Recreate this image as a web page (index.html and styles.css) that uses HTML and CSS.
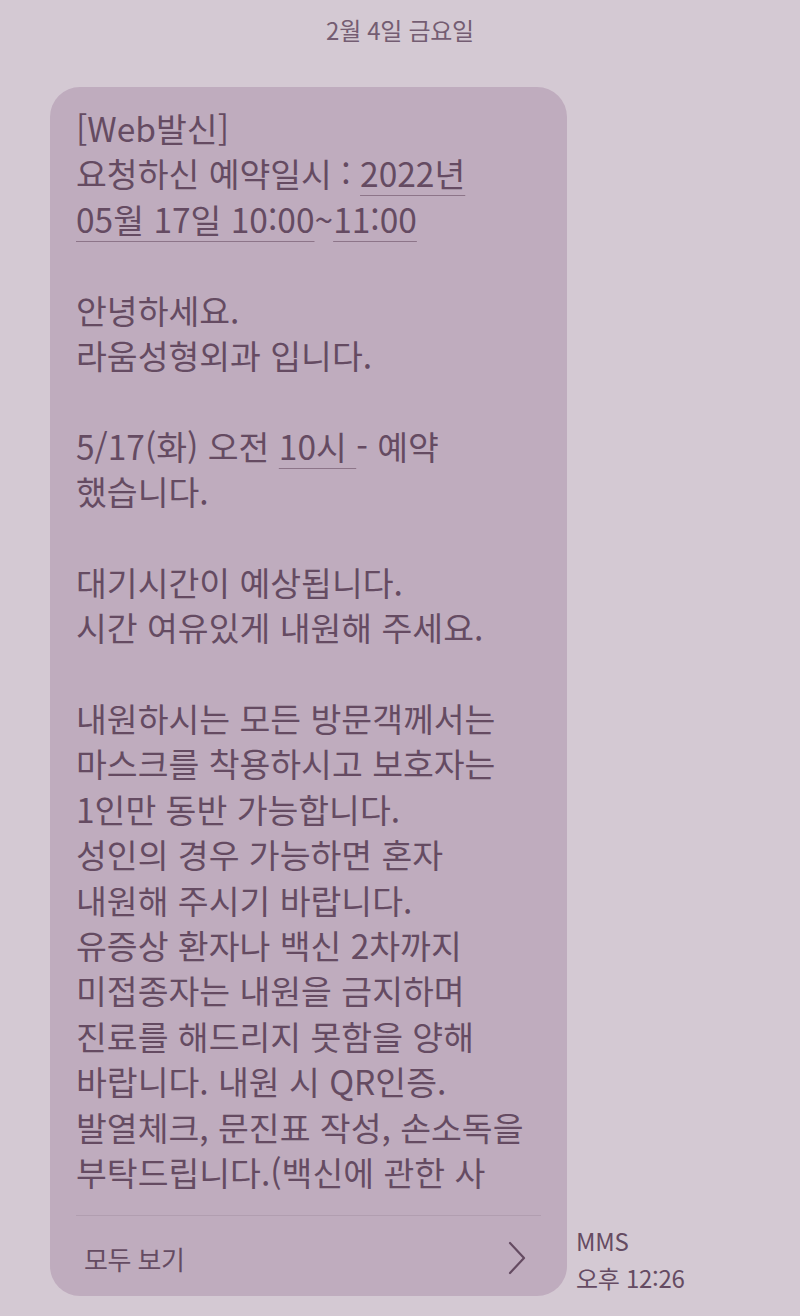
FILE: index.html
```html
<!DOCTYPE html>
<html lang="ko">
<head>
<meta charset="utf-8">
<title>MMS</title>
<link rel="stylesheet" href="styles.css">
</head>
<body>
<div class="screen">
  <div class="date">2월 4일 금요일</div>
  <div class="row">
    <div class="bubble">
      <div class="msg">
        <div class="line">[Web발신]</div>
        <div class="line">요청하신 예약일시 : <span class="link">2022년</span></div>
        <div class="line"><span class="link">05월 17일 10:00</span>~<span class="link">11:00</span></div>
        <div class="line blank"></div>
        <div class="line">안녕하세요.</div>
        <div class="line">라움성형외과 입니다.</div>
        <div class="line blank"></div>
        <div class="line">5/17(화) 오전 <span class="link">10시 </span>- 예약</div>
        <div class="line">했습니다.</div>
        <div class="line blank"></div>
        <div class="line">대기시간이 예상됩니다.</div>
        <div class="line">시간 여유있게 내원해 주세요.</div>
        <div class="line blank"></div>
        <div class="line">내원하시는 모든 방문객께서는</div>
        <div class="line">마스크를 착용하시고 보호자는</div>
        <div class="line">1인만 동반 가능합니다.</div>
        <div class="line">성인의 경우 가능하면 혼자</div>
        <div class="line">내원해 주시기 바랍니다.</div>
        <div class="line">유증상 환자나 백신 2차까지</div>
        <div class="line">미접종자는 내원을 금지하며</div>
        <div class="line">진료를 해드리지 못함을 양해</div>
        <div class="line">바랍니다. 내원 시 QR인증.</div>
        <div class="line">발열체크, 문진표 작성, 손소독을</div>
        <div class="line">부탁드립니다.(백신에 관한 사</div>
      </div>
      <div class="divider"></div>
      <div class="footer">
        <span class="more">모두 보기</span>
        <svg class="chev" width="20" height="34" viewBox="0 0 20 34" aria-hidden="true">
          <path d="M3 2 L17 17 L3 32" fill="none" stroke="#654b62" stroke-width="2.2" stroke-linecap="round" stroke-linejoin="round"/>
        </svg>
      </div>
    </div>
    <div class="meta">
      <div class="kind">MMS</div>
      <div class="time">오후 12:26</div>
    </div>
  </div>
</div>
</body>
</html>
```

FILE: styles.css
```css
html, body {
  margin: 0;
  padding: 0;
}
body {
  background: #d4c9d3;
  font-family: "Noto Sans CJK KR", "Noto Sans", sans-serif;
  color: #654b62;
  width: 800px;
  height: 1316px;
  overflow: hidden;
}
.screen {
  display: flex;
  flex-direction: column;
}
.date {
  text-align: center;
  font-size: 24px;
  line-height: 30px;
  padding-top: 15px;
  letter-spacing: -0.3px;
  color: #745d72;
  margin-bottom: 42px;
}
.row {
  display: flex;
  align-items: flex-end;
  gap: 9px;
  padding-left: 50px;
}
.bubble {
  width: 517px;
  box-sizing: border-box;
  background: #bfacbe;
  border-radius: 30px;
  padding: 18px 26px 0 26px;
}
.msg {
  font-size: 33.5px;
  line-height: 45.4px;
  white-space: nowrap;
}
.line {
  height: 45.4px;
}
.link {
  text-decoration: underline;
  text-decoration-color: #8d7589;
  text-decoration-thickness: 1px;
  text-underline-offset: 8px;
}
.divider {
  height: 1px;
  background: #b19eb0;
  margin-top: 21px;
}
.footer {
  height: 80px;
  box-sizing: border-box;
  display: flex;
  align-items: center;
  justify-content: space-between;
  padding: 4px 14px 0 8px;
}
.more {
  font-size: 26px;
  letter-spacing: -0.5px;
}
.chev {
  display: block;
}
.meta {
  font-size: 24px;
  line-height: 37px;
  color: #654b62;
}
.kind {
  letter-spacing: -0.3px;
}
.time {
  letter-spacing: -0.3px;
}
```
